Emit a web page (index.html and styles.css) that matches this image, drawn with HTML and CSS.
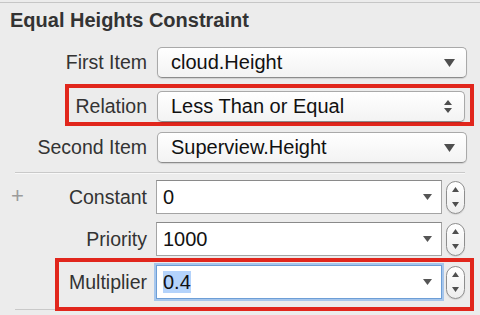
FILE: index.html
```html
<!DOCTYPE html>
<html>
<head>
<meta charset="utf-8">
<title>Equal Heights Constraint</title>
<link rel="stylesheet" href="styles.css">
</head>
<body>
<div class="panel">
	<h1 class="title">Equal Heights Constraint</h1>

	<div class="items">
		<div class="row">
			<span class="lab">First Item</span>
			<div class="popup"><span class="val">cloud.Height</span><svg class="down" width="11" height="8"><path d="M0 0H11L5.5 8Z"/></svg></div>
		</div>
		<div class="row mark mark-rel">
			<span class="lab">Relation</span>
			<div class="popup"><span class="val">Less Than or Equal</span><svg class="updown" width="8" height="13"><path d="M0 5L4 0L8 5Z M0 8H8L4 13Z"/></svg></div>
		</div>
		<div class="row">
			<span class="lab">Second Item</span>
			<div class="popup"><span class="val">Superview.Height</span><svg class="down" width="11" height="8"><path d="M0 0H11L5.5 8Z"/></svg></div>
		</div>
	</div>

	<div class="sep"></div>

	<div class="fields">
		<div class="row frow">
			<span class="lab"><span class="plus">+</span>Constant</span>
			<div class="combo"><span class="val">0</span><svg class="cdown" width="9" height="6"><path d="M0 0H9L4.5 6Z"/></svg></div>
			<div class="stepper"><svg width="9" height="22"><path d="M1 6L4.5 1L8 6Z M1 16H8L4.5 21Z"/></svg></div>
		</div>
		<div class="row frow">
			<span class="lab">Priority</span>
			<div class="combo"><span class="val">1000</span><svg class="cdown" width="9" height="6"><path d="M0 0H9L4.5 6Z"/></svg></div>
			<div class="stepper"><svg width="9" height="22"><path d="M1 6L4.5 1L8 6Z M1 16H8L4.5 21Z"/></svg></div>
		</div>
		<div class="row frow mark mark-mul">
			<span class="lab">Multiplier</span>
			<div class="combo focus"><span class="val"><span class="sel">0.4</span></span><svg class="cdown" width="9" height="6"><path d="M0 0H9L4.5 6Z"/></svg></div>
			<div class="stepper"><svg width="9" height="22"><path d="M1 6L4.5 1L8 6Z M1 16H8L4.5 21Z"/></svg></div>
		</div>
	</div>

	<div class="sep sep-end"></div>
</div>
</body>
</html>
```

FILE: styles.css
```css
*{margin:0; padding:0; box-sizing:border-box;}
body{background:#ececec; width:480px; height:315px; overflow:hidden; padding-top:2px; font-family:"Liberation Sans", Arial, sans-serif;}
.panel{border-top:1px solid #c6c6c6;}

.title{margin:6px 0 0 10px; font-size:20px; line-height:23px; font-weight:bold; color:#333;}

.items{margin-top:15px;}
.row{display:flex; align-items:center; padding-right:13px;}
.row + .row{margin-top:6px;}
.lab{flex:0 0 147px; text-align:right; font-size:19.5px; color:#333; margin-right:10px; display:flex; justify-content:flex-end;}

.popup{flex:1; height:31px; display:flex; align-items:center; justify-content:space-between; padding:0 11px 0 13px; background:linear-gradient(#fff, #f3f3f3); border:1px solid #a9a9a9; border-bottom-color:#8c8c8c; border-radius:5px; box-shadow:0 1px 1px rgba(0,0,0,0.12);}
.val{font-size:20px; color:#111;}
.down, .cdown, .updown, .stepper svg{fill:#4f4f4f; display:block;}
.updown{margin-right:1px;}

/* red annotation boxes */
.mark{border:4px solid #e1261c; position:relative;}
.mark-rel{margin:4px 6px 0 65px; padding:3px 5px 0 0;}
.mark-rel .lab{flex-basis:78px;}
.row.mark-rel + .row{margin-top:6px;}

.sep{height:1px; background:#c9c9c9; margin:9px 15px 0 15px; box-shadow:0 1px 0 #f8f8f8;}

.fields{margin-top:7px;}
.frow{padding-right:15px;}
.frow + .frow{margin-top:8px;}
.frow .lab{margin-right:9px;}
.plus{color:#9b9b9b; font-size:22px; font-weight:300; padding-left:11px; line-height:20px; margin-right:auto;}

.combo{flex:1; height:34px; display:flex; align-items:center; justify-content:space-between; padding:0 9px 0 6px; background:#fff; border:1px solid #a4a4a4; border-top-color:#8a8a8a;}
.cdown{fill:#555;}
.focus{border-color:#6d9ed6; box-shadow:0 0 0 2px #a6c6ec;}
.sel{background:#b4d3fb;}

.stepper{flex:0 0 19px; height:33px; margin-left:4px; border:1px solid #8e8e8e; border-radius:10px; background:linear-gradient(#fff, #eee); display:flex; align-items:center; justify-content:center; box-shadow:0 1px 1px rgba(0,0,0,0.1);}

.frow.mark-mul{margin:2px 6px 0 55px; padding:3px 5px 8px 0;}
.mark-mul .lab{flex-basis:88px;}

.sep-end{margin-top:-2px; box-shadow:none;}
```
